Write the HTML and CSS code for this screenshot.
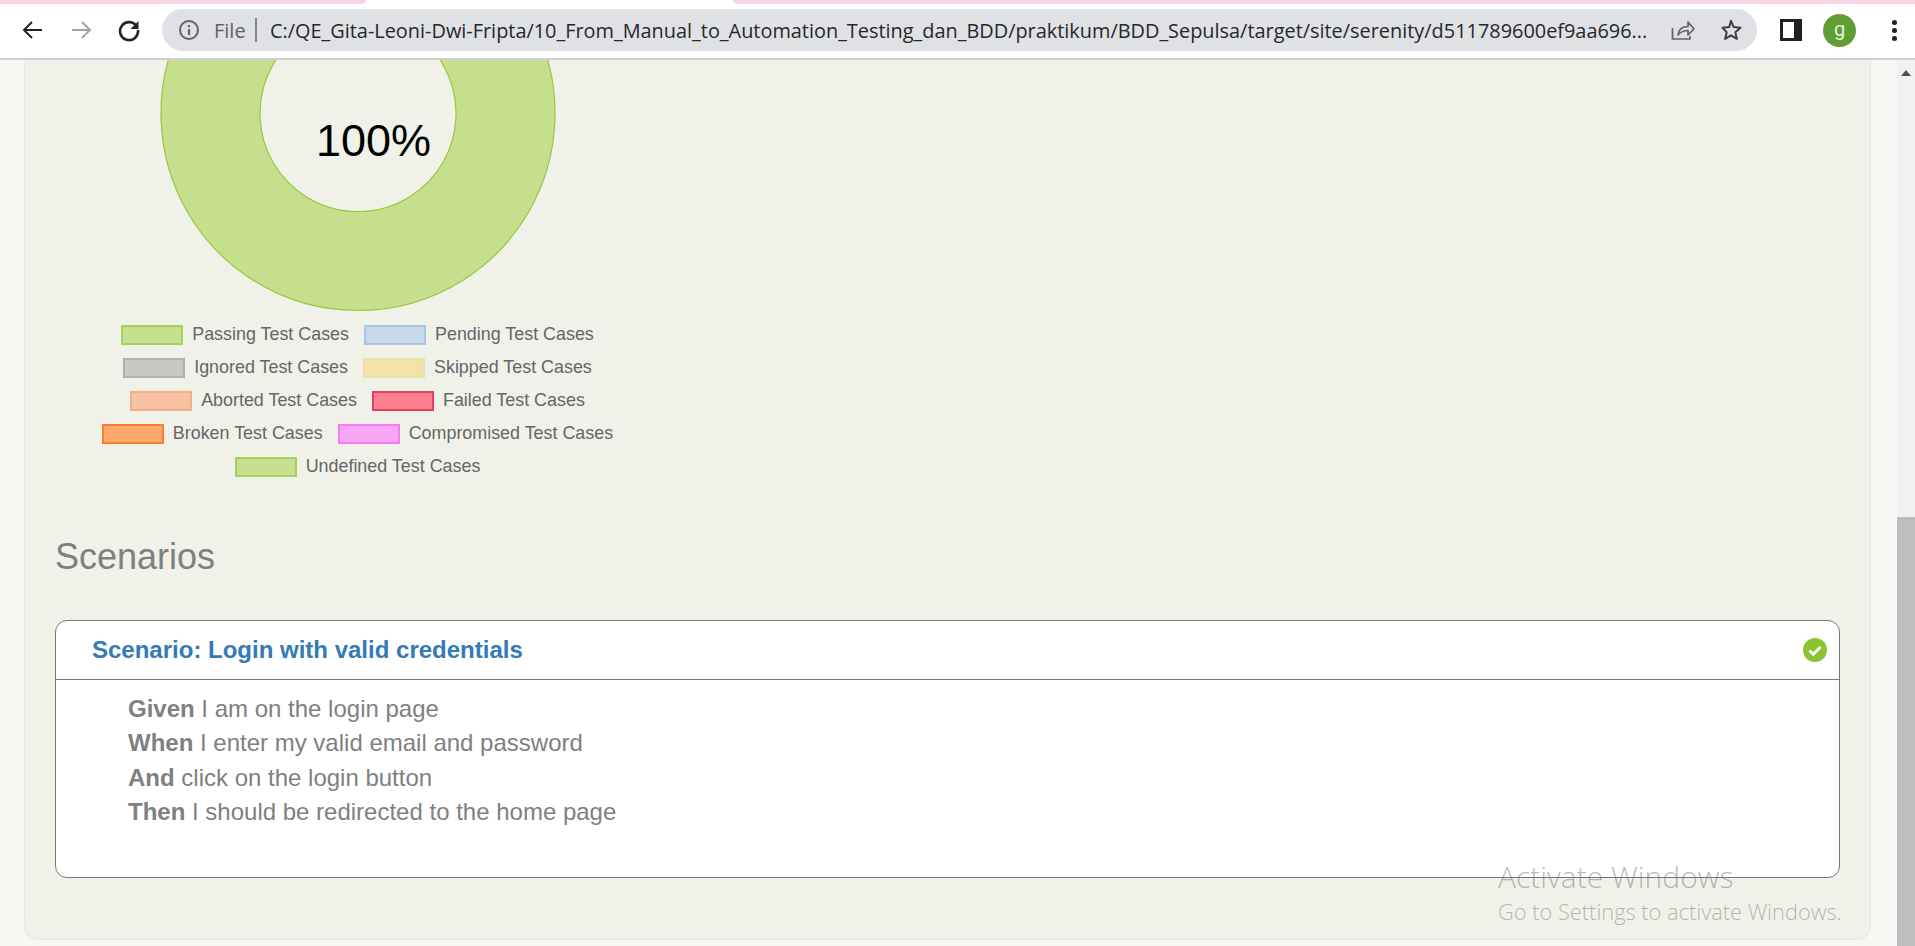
FILE: index.html
```html
<!DOCTYPE html>
<html lang="en">
<head>
<meta charset="utf-8">
<title>Serenity report</title>
<link rel="stylesheet" href="styles.css">
</head>
<body>
<div class="tabstrip"><span class="tab-left"></span><span class="tab-gap"></span><span class="tab-right"></span></div>
<header class="toolbar">
  <div class="navs">
    <svg class="ico" width="24" height="24" viewBox="0 0 24 24"><path d="M21 12H3.500M11 4l-8 8 8 8" fill="none" stroke="#222" stroke-width="2"/></svg>
    <svg class="ico" width="24" height="24" viewBox="0 0 24 24"><path d="M3 12h17.500M13 4l8 8-8 8" fill="none" stroke="#a3a3a3" stroke-width="2"/></svg>
    <svg class="ico" width="24" height="24" viewBox="0 0 24 24"><path d="M19.800 8.500A9 9 0 1 0 21 12" fill="none" stroke="#222" stroke-width="2.600"/><path d="M21.500 3v8H13.500z" fill="#222"/></svg>
  </div>
  <div class="omnibox">
    <svg class="info" width="22" height="22" viewBox="0 0 22 22"><circle cx="11" cy="11" r="9" fill="none" stroke="#5f6368" stroke-width="2"/><path d="M11 10v6M11 6v2.200" stroke="#5f6368" stroke-width="2.200"/></svg>
    <span class="file">File</span>
    <span class="sep"></span>
    <span class="url">C:/QE_Gita-Leoni-Dwi-Fripta/10_From_Manual_to_Automation_Testing_dan_BDD/praktikum/BDD_Sepulsa/target/site/serenity/d511789600ef9aa696...</span>
    <svg class="share" width="26" height="26" viewBox="0 0 26 26"><path d="M3.500 11v11h17.500v-3" fill="none" stroke="#5f6368" stroke-width="1.700"/><path d="M9 18c.6-5 4-8.500 10-8.500V5l6 7-6 6v-4.500c-4 0-7.500 1.500-10 4.500z" fill="none" stroke="#5f6368" stroke-width="1.700" stroke-linejoin="round"/></svg>
    <svg class="star" width="24" height="24" viewBox="0 0 24 24"><path d="M12 2.800l2.700 6.300 6.800.6-5.200 4.500 1.600 6.700-5.900-3.600-5.900 3.600 1.600-6.700L3.500 9.700l6.800-.6z" fill="none" stroke="#3c4043" stroke-width="2" stroke-linejoin="round"/></svg>
  </div>
  <div class="tools">
    <span class="sidepanel"><span class="sidepanel-open"></span></span>
    <span class="avatar">g</span>
    <span class="menu"><i></i><i></i><i></i></span>
  </div>
</header>
<div class="viewport">
  <main class="page">
    <section class="panel">
      <div class="chart">
        <svg class="donut" width="605" height="252" viewBox="0 0 605 252">
          <path d="M303 -143.500a197 197 0 1 0 .01 0zM303 -44.500a98 98 0 1 1 -.01 0z" fill="#c5df8d" fill-rule="evenodd" stroke="#98c83c" stroke-width="1.200"/>
        </svg>
        <span class="pct">100%</span>
      </div>
      <div class="legend">
        <div class="row">
          <span class="item"><i class="sw passing"></i>Passing Test Cases</span>
          <span class="item"><i class="sw pending"></i>Pending Test Cases</span>
        </div>
        <div class="row">
          <span class="item"><i class="sw ignored"></i>Ignored Test Cases</span>
          <span class="item"><i class="sw skipped"></i>Skipped Test Cases</span>
        </div>
        <div class="row">
          <span class="item"><i class="sw aborted"></i>Aborted Test Cases</span>
          <span class="item"><i class="sw failed"></i>Failed Test Cases</span>
        </div>
        <div class="row">
          <span class="item"><i class="sw broken"></i>Broken Test Cases</span>
          <span class="item"><i class="sw compromised"></i>Compromised Test Cases</span>
        </div>
        <div class="row">
          <span class="item"><i class="sw passing"></i>Undefined Test Cases</span>
        </div>
      </div>
      <h2 class="section-title">Scenarios</h2>
      <article class="scenario">
        <div class="scenario-head">
          <h3 class="scenario-title">Scenario: Login with valid credentials</h3>
          <svg class="ok" width="24" height="24" viewBox="0 0 24 24"><circle cx="12" cy="12" r="12" fill="#8cc332"/><path d="M6.500 12.500l3.800 3.800 7.200-7.300" fill="none" stroke="#fff" stroke-width="2.700"/></svg>
        </div>
        <div class="steps">
          <p class="step"><b>Given</b> I am on the login page</p>
          <p class="step"><b>When</b> I enter my valid email and password</p>
          <p class="step"><b>And</b> click on the login button</p>
          <p class="step"><b>Then</b> I should be redirected to the home page</p>
        </div>
      </article>
    </section>
  </main>
  <div class="scrollbar">
    <span class="arrow"></span>
    <span class="thumb"></span>
  </div>
</div>
<div class="watermark">
  <div class="wm-title">Activate Windows</div>
  <div class="wm-sub">Go to Settings to activate Windows.</div>
</div>
</body>
</html>
```
FILE: styles.css
```css
* { box-sizing: border-box; }
html, body { margin: 0; height: 100%; overflow: hidden; }
body { width: 1915px; height: 946px; background: #fff; font-family: "Liberation Sans", Arial, sans-serif; display: flex; flex-direction: column; position: relative; }

.tabstrip { display: flex; height: 4px; flex: none; }
.tab-left { width: 366px; background: #f6d4e6; border-bottom-right-radius: 4px; }
.tab-gap { width: 367px; background: #fff; }
.tab-right { flex: 1; background: #f6d4e6; border-bottom-left-radius: 4px; }

.toolbar { height: 56px; flex: none; display: flex; align-items: center; background: #fff; border-bottom: 2px solid #cfcfcf; padding-bottom: 2px; }
.navs { display: flex; align-items: center; gap: 24px; width: 162px; padding-left: 21px; }
.ico { flex: none; }
.omnibox { width: 1595px; height: 42px; background: #dfe1e4; border-radius: 21px; display: flex; align-items: center; padding-left: 16px; }
.info { flex: none; }
.file { font-family: "Open Sans", sans-serif; font-size: 20px; color: #5f6368; margin-left: 14px; width: 41px; }
.sep { width: 2px; height: 24px; background: #80868b; }
.url { font-family: "Open Sans", sans-serif; font-size: 19.900px; color: #26282b; margin-left: 13px; width: 1393px; white-space: nowrap; overflow: hidden; }
.share { flex: none; margin-left: 6px; }
.star { flex: none; margin-left: 24px; }
.tools { display: flex; align-items: center; flex: 1; padding-left: 23px; }
.sidepanel { width: 22px; height: 22px; background: #202124; display: flex; padding: 3px; flex: none; }
.sidepanel-open { width: 11px; background: #fff; }
.avatar { width: 33px; height: 33px; border-radius: 50%; background: #5f9e32; color: #e6f2d8; font-family: Roboto, sans-serif; font-size: 20px; display: flex; align-items: center; justify-content: center; margin-left: 21px; padding-bottom: 3px; flex: none; }
.menu { display: flex; flex-direction: column; gap: 3px; margin-left: 36px; }
.menu i { width: 5px; height: 5px; border-radius: 50%; background: #202124; }

.viewport { flex: 1; display: flex; min-height: 0; background: #f7f8f3; }
.page { flex: 1; padding: 0 26px 6px 24px; min-width: 0; }
.panel { height: 880px; background: #f0f1e9; border: 1px solid #e8e9e1; border-top: 0; border-radius: 0 0 14px 14px; padding: 0 30px; }
.chart { position: relative; width: 605px; height: 252px; }
.donut { display: block; }
.pct { position: absolute; left: 261px; top: 53px; font-size: 45px; line-height: 56px; color: #000; }

.legend { width: 605px; padding-top: 6px; }
.row { height: 33px; display: flex; justify-content: center; align-items: center; gap: 15px; }
.item { display: flex; align-items: center; gap: 9px; font-size: 17.900px; color: #666; white-space: nowrap; }
.sw { width: 62px; height: 20px; border: 2px solid; display: block; flex: none; }
.passing { background: #c5e08e; border-color: #a9d05f; }
.pending { background: #c7d9ea; border-color: #aac5e0; }
.ignored { background: #c8c8c4; border-color: #b0b0ac; }
.skipped { background: #efe3a8; border-color: #ece0a0; }
.aborted { background: #f7c2a2; border-color: #f6ae86; }
.failed { background: #fb8090; border-color: #e8405c; }
.broken { background: #fba96f; border-color: #fb7d2c; }
.compromised { background: #f7a7f3; border-color: #f47cef; }

.section-title { margin: 0; padding-top: 52px; font-size: 36px; line-height: 44px; font-weight: 400; color: #808080; }
.scenario { margin-top: 41px; height: 258px; background: #fff; border: 1px solid #777; border-radius: 12px; }
.scenario-head { height: 59px; border-bottom: 1px solid #777; display: flex; align-items: center; justify-content: space-between; padding: 0 12px 0 36px; }
.scenario-title { margin: 0; font-size: 24px; font-weight: 700; color: #337ab7; }
.ok { flex: none; }
.steps { padding: 12px 0 0 72px; }
.step { margin: 0; height: 34.400px; line-height: 34.400px; font-size: 24px; color: #808080; }

.scrollbar { width: 18px; flex: none; background: #f1f1f1; display: flex; flex-direction: column; align-items: center; justify-content: space-between; padding-top: 10px; }
.arrow { width: 0; height: 0; border: 5px solid transparent; border-top: 0; border-bottom: 6px solid #505050; }
.thumb { width: 18px; height: 429px; background: #bdbdbd; }

.watermark { position: absolute; left: 1498px; top: 859px; color: rgba(110, 110, 105, .48); font-family: "Open Sans", sans-serif; white-space: nowrap; }
.wm-title { font-size: 30px; font-weight: 300; line-height: 36px; }
.wm-sub { font-size: 21.800px; font-weight: 300; line-height: 34px; }
```
